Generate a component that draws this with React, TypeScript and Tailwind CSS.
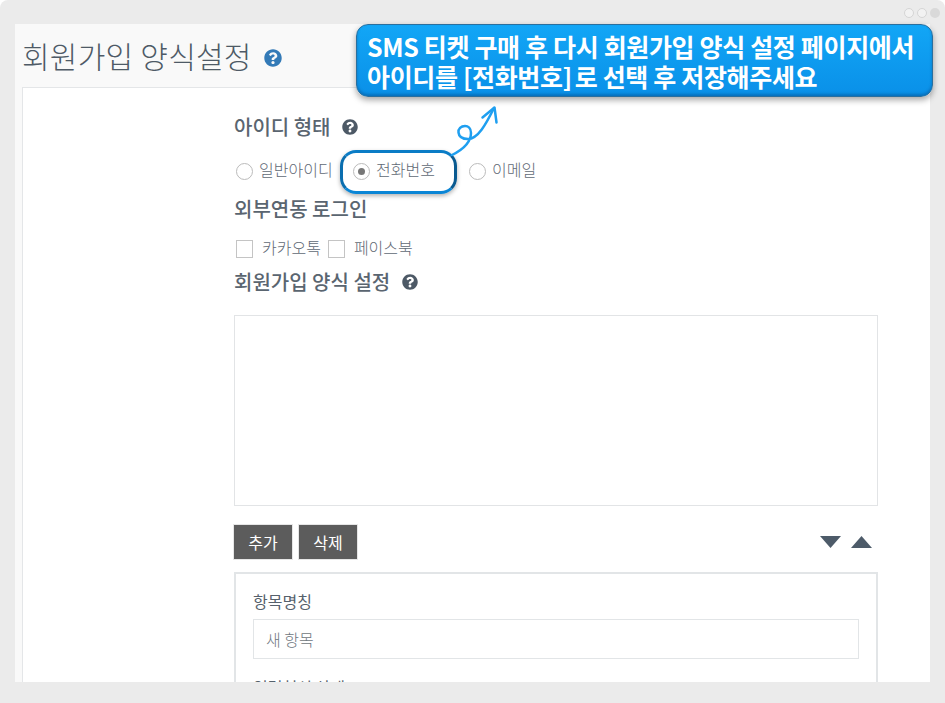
import { FaQuestionCircle } from "react-icons/fa";

const font = { fontFamily: '"Noto Sans CJK KR", "Noto Sans", sans-serif' };

function Radio({ label, checked }: { label: string; checked?: boolean }) {
  return (
    <label className="flex items-center">
      <span className="flex h-[17px] w-[17px] items-center justify-center rounded-full border border-[#bbbbbb] bg-white">
        {checked && <span className="h-[7px] w-[7px] rounded-full bg-[#777777]" />}
      </span>
      <span className="relative top-[-2px] ml-[6px] text-[16px] leading-5 font-light text-[#5f6975]">{label}</span>
    </label>
  );
}

function Check({ label }: { label: string }) {
  return (
    <label className="flex items-center">
      <span className="h-[18px] w-[17px] border border-[#c4c4c4] bg-white" />
      <span className="relative top-[-2px] ml-[9px] text-[16px] leading-5 font-light text-[#5f6975]">{label}</span>
    </label>
  );
}

function Heading({ children }: { children: React.ReactNode }) {
  return <h3 className="flex items-center text-[20px] leading-6 font-medium text-[#5a6570]">{children}</h3>;
}

export default function App() {
  return (
    <div className="relative h-[703px] w-[945px] overflow-hidden bg-white" style={font}>
      <div className="flex h-full flex-col rounded-tl-[8px] rounded-tr-[8px] bg-[#ebebeb] px-[15px] pt-[24px] pb-[21px]">
        <div className="flex min-h-0 flex-1 flex-col overflow-hidden bg-[#f9f9f9] pl-[7px]">
          <div className="flex h-[63px] shrink-0 items-center">
            <h1 className="text-[30px] font-light tracking-[0.25px] text-[#4e5a66]">회원가입 양식설정</h1>
            <FaQuestionCircle className="ml-[12px] mt-[5px] text-[18px] text-[#337ab7]" />
          </div>
          <div className="min-h-0 flex-1 border-t border-l border-[#e4e6e8] bg-white pl-[211px] pr-[52px] pt-[27px]">
            <Heading>
              아이디 형태
              <FaQuestionCircle className="ml-[11px] text-[16px] text-[#4d5966]" />
            </Heading>
            <div className="mt-[20px] flex h-[24px] items-center pl-[2px]">
              <div className="flex w-[117px]"><Radio label="일반아이디" /></div>
              <div className="flex w-[116px]"><Radio label="전화번호" checked /></div>
              <Radio label="이메일" />
            </div>
            <div className="mt-[14px]"><Heading>외부연동 로그인</Heading></div>
            <div className="mt-[17px] flex h-[22px] items-center gap-[7px] pl-[2px]">
              <Check label="카카오톡" />
              <Check label="페이스북" />
            </div>
            <div className="mt-[10px]">
              <Heading>
                회원가입 양식 설정
                <FaQuestionCircle className="ml-[12px] text-[16px] text-[#4d5966]" />
              </Heading>
            </div>
            <div className="mt-[21px] h-[191px] border border-[#e2e4e6] bg-white" />
            <div className="mt-[18px] flex items-center justify-between pr-[4px]">
              <div className="-ml-[1px] flex gap-[5px]">
                <button className="h-[36px] w-[60px] border border-[#e6e6e6] bg-[#5c5c5c] text-[16px] text-white">추가</button>
                <button className="h-[36px] w-[60px] border border-[#e6e6e6] bg-[#5c5c5c] text-[16px] text-white">삭제</button>
              </div>
              <div className="flex items-center gap-[10px] pr-[2px]">
                <svg width="21" height="12" viewBox="0 0 21 12"><path d="M0 0h21L10.5 12z" fill="#4d5b69" /></svg>
                <svg width="21" height="12" viewBox="0 0 21 12"><path d="M0 12h21L10.5 0z" fill="#4d5b69" /></svg>
              </div>
            </div>
            <div className="mt-[12px] border-2 border-b-0 border-[#e2e5e7] bg-white px-[17px] pt-[17px] pb-[20px]">
              <div className="text-[16px] leading-5 text-[#56616c]">항목명칭</div>
              <div className="mt-[8px] flex h-[40px] items-center border border-[#e2e5e7] px-[12px] text-[16px] font-light text-[#6f7780]">새 항목</div>
              <div className="mt-[18px] text-[16px] leading-5 text-[#56616c]">입력형식 상태</div>
            </div>
          </div>
        </div>
      </div>

      {/* window dots */}
      <div className="absolute top-[8px] right-[5px] flex gap-[3px]">
        <span className="h-[10px] w-[10px] rounded-full border border-[#d5d5d5] bg-[#f2f2f2]" />
        <span className="h-[10px] w-[10px] rounded-full border border-[#d5d5d5] bg-[#f2f2f2]" />
        <span className="h-[10px] w-[10px] rounded-full bg-[#d9d9d9]" />
      </div>

      {/* callout */}
      <div className="absolute top-[24px] left-[356px] h-[73px] w-[577px] rounded-[12px] border border-[#2a6f9e] bg-gradient-to-b from-[#12a6f6] to-[#0a90e8] pl-[10px] pt-[6px] text-[25px] leading-[30px] font-bold tracking-[-0.35px] text-white shadow-[0_3px_6px_rgba(0,0,0,0.35),inset_0_-2px_3px_rgba(0,50,100,0.35)]">
        <div className="whitespace-nowrap">SMS 티켓 구매 후 다시 회원가입 양식 설정 페이지에서</div>
        <div className="whitespace-nowrap">아이디를 [전화번호]<span className="ml-[3px]">로 선택 후 저장해주세요</span></div>
      </div>

      {/* highlight around the selected radio */}
      <div className="absolute top-[150px] left-[340px] h-[44px] w-[117px] rounded-[16px] border-[3px] border-t-[#0a7cc6] border-r-[#0a5a90] border-b-[#0a85d5] border-l-[#0a6eaf] shadow-[0_2px_4px_rgba(0,0,0,0.3)]" />

      {/* curly arrow */}
      <svg className="absolute top-[104px] left-[450px]" width="52" height="54" viewBox="0 0 52 54" fill="none" stroke="#1f9ff0" strokeWidth="2.5" strokeLinecap="round" strokeLinejoin="round">
        <path d="M2 51C10 47 21 40 21 29C21 24 18 22 15 22C11 22 8 25 8.5 28.5C9 33 13 35 18 35C28 35 36 20 44 4" />
        <path d="M32.5 13.5L44.5 3.5L46.5 18.5" />
      </svg>
    </div>
  );
}
